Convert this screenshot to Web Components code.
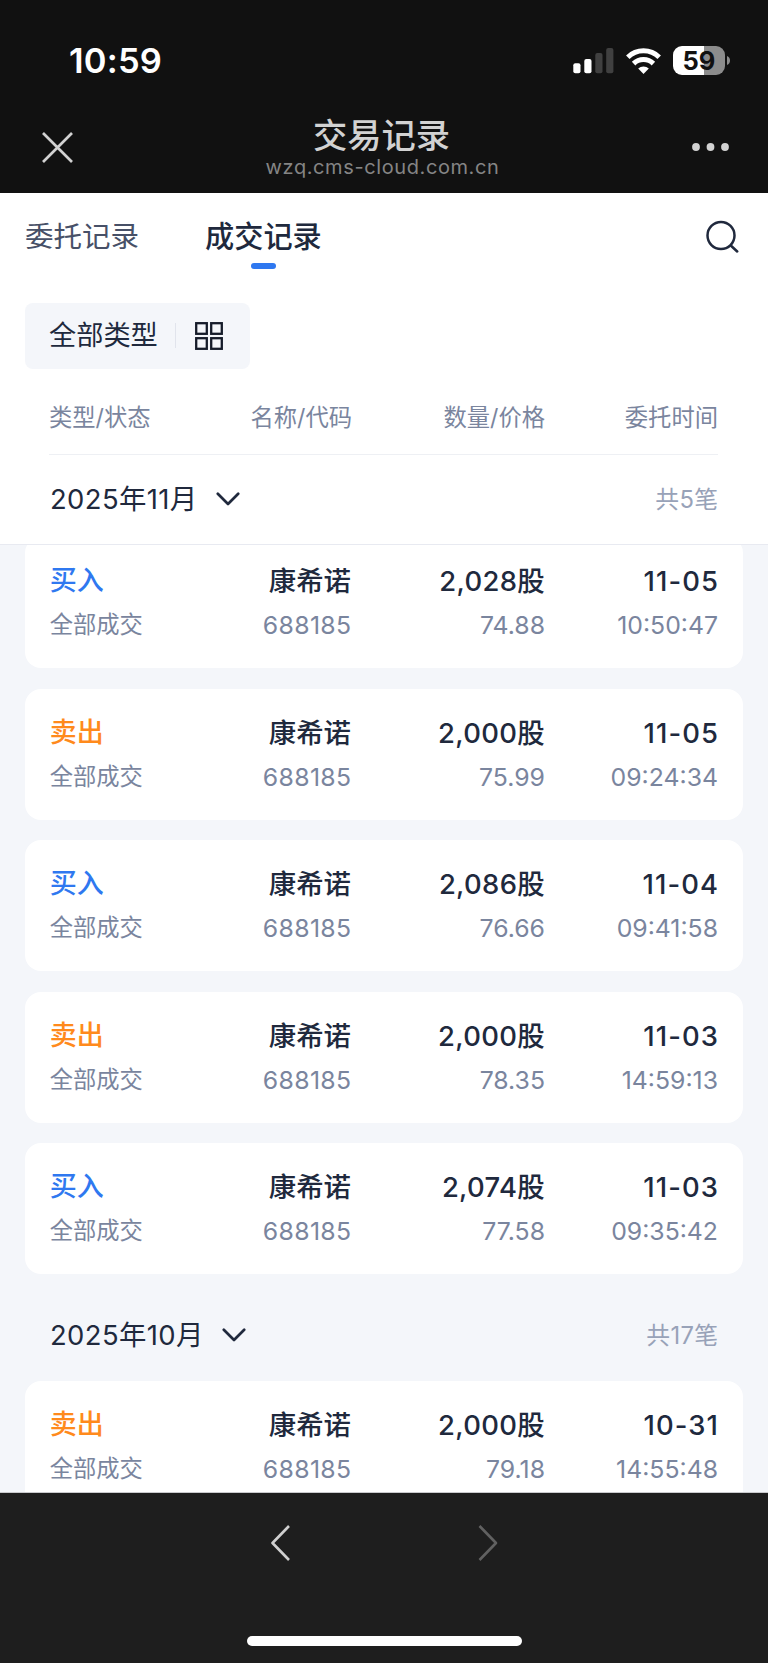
<!DOCTYPE html>
<html lang="zh-CN">
<head>
<meta charset="utf-8">
<title>交易记录</title>
<style>
  html, body {
    margin: 0;
    height: 100%;
  }
  body {
    font-family: Inter, "Noto Sans CJK SC", sans-serif;
    color: #20293d;
    overflow: hidden;
  }
</style>
</head>
<body>
<trade-app></trade-app>

<template id="status-bar">
  <style>
    :host {
      display: flex;
      justify-content: space-between;
      align-items: center;
      box-sizing: border-box;
      height: 103px;
      padding: 19px 38px 0 69px;
      color: #fff;
    }
    .time { font-size: 34.5px; font-weight: 600; line-height: 40px; letter-spacing: 0.2px; font-kerning: none; }
    .icons { display: flex; align-items: center; gap: 12px; }
    svg { display: block; }
    .signal { margin-bottom: 2px; }
    .battery { display: flex; align-items: center; gap: 2px; margin-bottom: 1px; }
    .level {
      width: 52px;
      height: 29px;
      border-radius: 9px;
      background: linear-gradient(90deg, #fff 31px, #8c8c8c 31px);
      color: #111;
      font-size: 25.5px;
      font-weight: 700;
      line-height: 29px;
      text-align: center;
    }
  </style>
  <span class="time"><slot></slot></span>
  <div class="icons">
    <svg class="signal" width="41" height="27" viewBox="0 0 41 27">
      <rect x="0.3" y="16.2" width="7.2" height="10" rx="2" fill="#fff"/>
      <rect x="11.3" y="12" width="7.2" height="14.2" rx="2" fill="#fff"/>
      <rect x="22.3" y="6" width="7.2" height="20.2" rx="2" fill="#404040"/>
      <rect x="33.2" y="1" width="7.2" height="25.2" rx="2" fill="#404040"/>
    </svg>
    <svg width="35" height="26" viewBox="0 0 35 26">
      <g fill="none" stroke="#fff" stroke-width="5">
        <path d="M1.8 9.2a22.6 22.6 0 0 1 31.4 0"/>
        <path d="M7.6 15.6a14.2 14.2 0 0 1 19.8 0"/>
      </g>
      <path d="M17.5 26l-5.3-5.4a7.6 7.6 0 0 1 10.6 0z" fill="#fff"/>
    </svg>
    <div class="battery">
      <div class="level"><slot name="battery"></slot></div>
      <svg width="3" height="9" viewBox="0 0 3 9"><path d="M0 0q3 1.2 3 4.5t-3 4.5z" fill="#8c8c8c"/></svg>
    </div>
  </div>
</template>

<template id="nav-bar">
  <style>
    :host {
      display: flex;
      justify-content: space-between;
      align-items: center;
      box-sizing: border-box;
      height: 90px;
      padding: 0 38px 2px 42px;
      color: #d2d2d2;
    }
    .titles { text-align: center; }
    .title { height: 42px; line-height: 40px; margin-right: 2px; font-size: 34.3px; font-weight: 500; }
    .host { height: 21px; line-height: 19px; font-size: 20px; letter-spacing: 0.6px; color: #858585; }
    svg { display: block; }
  </style>
  <svg width="31" height="31" viewBox="0 0 31 31" fill="none" stroke="#d2d2d2" stroke-width="2.7">
    <path d="M1 1l29 29M30 1L1 30"/>
  </svg>
  <div class="titles">
    <div class="title"><slot></slot></div>
    <div class="host"><slot name="host"></slot></div>
  </div>
  <svg width="38" height="8" viewBox="0 0 38 8" fill="#d2d2d2">
    <circle cx="4" cy="4" r="3.9"/><circle cx="18.5" cy="4" r="3.9"/><circle cx="33" cy="4" r="3.9"/>
  </svg>
</template>

<template id="record-tab">
  <style>
    :host {
      display: flex;
      flex-direction: column;
      align-items: center;
      gap: 4px;
      color: #475067;
      font-size: 28.5px;
    }
    .label { height: 44px; line-height: 44px; white-space: nowrap; }
    .mark { width: 25px; height: 6px; border-radius: 3px; }
    :host([active]) { color: #20293d; font-weight: 500; font-size: 29.2px; }
    :host([active]) .mark { background: #2f78f0; }
  </style>
  <span class="label"><slot></slot></span>
  <span class="mark"></span>
</template>

<template id="type-filter">
  <style>
    :host {
      display: flex;
      align-items: center;
      box-sizing: border-box;
      width: 225px;
      height: 66px;
      padding: 0 0 1px 24px;
      border-radius: 8px;
      background: #f4f6fa;
      font-size: 27.2px;
    }
    .label { height: 40px; line-height: 40px; white-space: nowrap; }
    .rule { width: 1px; height: 25px; margin: 0 19px 0 17px; background: #e1e4ec; }
  </style>
  <span class="label"><slot></slot></span>
  <span class="rule"></span>
  <svg width="28" height="28" viewBox="0 0 28 28" fill="none" stroke="#161c2a" stroke-width="2.3">
    <rect x="1.2" y="1.2" width="10.6" height="10.6"/>
    <rect x="16.2" y="1.2" width="10.6" height="10.6"/>
    <rect x="1.2" y="16.2" width="10.6" height="10.6"/>
    <rect x="16.2" y="16.2" width="10.6" height="10.6"/>
  </svg>
</template>

<template id="column-head">
  <style>
    :host {
      display: grid;
      grid-template-columns: var(--columns);
      align-items: center;
      box-sizing: border-box;
      height: 73px;
      margin: 13px 50px 0 49px;
      border-bottom: 1px solid #eef0f4;
      color: #7a859e;
      font-size: 23.3px;
      line-height: 34px;
      text-align: right;
      white-space: nowrap;
    }
    ::slotted(:first-child) { text-align: left; }
  </style>
  <slot></slot>
</template>

<template id="month-row">
  <style>
    :host {
      display: flex;
      align-items: center;
      box-sizing: border-box;
      height: 89px;
      padding: 0 50px 1px;
    }
    .month { height: 40px; line-height: 40px; font-size: 27.4px; letter-spacing: 0.4px; }
    svg { margin-left: 18px; }
    .total { margin-left: auto; height: 34px; line-height: 36px; font-size: 23.8px; letter-spacing: 0.3px; margin-right: -0.3px; color: #98a2b8; }
  </style>
  <span class="month"></span>
  <svg width="24" height="14" viewBox="0 0 24 14" fill="none" stroke="#20293d" stroke-width="2.7" stroke-linecap="round" stroke-linejoin="round">
    <path d="M1.8 1.8L12 12 22.2 1.8"/>
  </svg>
  <span class="total"></span>
</template>

<template id="trade-card">
  <style>
    :host {
      display: grid;
      grid-template-columns: var(--columns);
      grid-template-rows: 44px 44px;
      align-items: center;
      box-sizing: border-box;
      height: 131px;
      margin: 0 25px;
      padding: 22px 25px 0 24px;
      border-radius: 16px;
      background: #fff;
      text-align: right;
      white-space: nowrap;
    }
    span { height: 44px; line-height: 44px; }
    .main { font-size: 27.4px; font-weight: 500; }
    .sub { font-size: 24.8px; color: #7a859e; }
    .side, .status { text-align: left; padding-left: 0.7px; }
    .side { color: #2f78f0; font-size: 27px; }
    .status { font-size: 23.3px; }
    .name { padding-right: 1px; }
    .qty { letter-spacing: 0.35px; }
    .date { letter-spacing: 1.1px; margin-right: -1.1px; }
    .code { letter-spacing: 0.35px; padding-right: 0.5px; }
    :host([side="卖出"]) .side { color: #ff8a1c; }
  </style>
  <span class="main side"></span>
  <span class="main name"></span>
  <span class="main qty"></span>
  <span class="main date"></span>
  <span class="sub status"></span>
  <span class="sub code"></span>
  <span class="sub price"></span>
  <span class="sub time"></span>
</template>

<template id="browser-bar">
  <style>
    :host {
      display: flex;
      flex-direction: column;
      align-items: center;
      justify-content: space-between;
      box-sizing: border-box;
      height: 171px;
      padding: 32px 0 17px;
      border-top: 1px solid #c9cacd;
      background: #1e1e1e;
    }
    .arrows { display: flex; gap: 187px; }
    .home { width: 275px; height: 10px; border-radius: 5px; background: #fff; }
  </style>
  <div class="arrows">
    <svg width="20" height="36" viewBox="0 0 20 36" fill="none" stroke="#d0d0d0" stroke-width="2.6" stroke-linejoin="round">
      <path d="M18 1L1.500 18 18 35"/>
    </svg>
    <svg width="20" height="36" viewBox="0 0 20 36" fill="none" stroke="#616161" stroke-width="2.6" stroke-linejoin="round">
      <path d="M1.500 1L18 18 1.500 35"/>
    </svg>
  </div>
  <div class="home"></div>
</template>

<template id="trade-app">
  <style>
    :host {
      --columns: 126px 177px 193px 173px;
      display: flex;
      flex-direction: column;
      height: 100vh;
      background: #f4f6fa;
    }
    .top { background: #111; }
    .panel { flex: none; background: #fff; border-bottom: 1px solid #e8eaf1; }
    .tabs { display: flex; align-items: flex-start; box-sizing: border-box; height: 88px; padding: 22px 28px 0 25px; }
    .tabs record-tab + record-tab { margin-left: 66px; }
    .search { margin: 4px 0 0 auto; }
    type-filter { margin: 22px 0 0 25px; }
    .list { flex: 1; min-height: 0; overflow: hidden; }
    .cards { display: flex; flex-direction: column; gap: 20.5px; }
    .cards:first-child { margin-top: -7.6px; }
    .list month-row { height: 107px; padding-top: 15px; }
  </style>
  <div class="top">
    <status-bar>10:59<span slot="battery">59</span></status-bar>
    <nav-bar>交易记录<span slot="host">wzq.cms-cloud.com.cn</span></nav-bar>
  </div>
  <div class="panel">
    <div class="tabs">
      <record-tab>委托记录</record-tab>
      <record-tab active>成交记录</record-tab>
      <svg class="search" width="34" height="34" viewBox="0 0 34 34" fill="none" stroke="#20293d" stroke-width="2.5" stroke-linecap="round">
        <circle cx="15" cy="16.500" r="13.500"/><path d="M25.300 27l5.900 5.500"/>
      </svg>
    </div>
    <type-filter>全部类型</type-filter>
    <column-head>
      <span>类型/状态</span><span>名称/代码</span><span>数量/价格</span><span>委托时间</span>
    </column-head>
    <month-row month="2025年11月" total="共5笔"></month-row>
  </div>
  <div class="list">
    <div class="cards">
      <trade-card side="买入" qty="2,028股" date="11-05" price="74.88" time="10:50:47"></trade-card>
      <trade-card side="卖出" qty="2,000股" date="11-05" price="75.99" time="09:24:34"></trade-card>
      <trade-card side="买入" qty="2,086股" date="11-04" price="76.66" time="09:41:58"></trade-card>
      <trade-card side="卖出" qty="2,000股" date="11-03" price="78.35" time="14:59:13"></trade-card>
      <trade-card side="买入" qty="2,074股" date="11-03" price="77.58" time="09:35:42"></trade-card>
    </div>
    <month-row month="2025年10月" total="共17笔"></month-row>
    <div class="cards">
      <trade-card side="卖出" qty="2,000股" date="10-31" price="79.18" time="14:55:48"></trade-card>
    </div>
  </div>
  <browser-bar></browser-bar>
</template>

<script>
class TemplateElement extends HTMLElement {
  connectedCallback() {
    if (this.shadowRoot) return;
    const root = this.attachShadow({ mode: "open" });
    root.append(document.getElementById(this.localName).content.cloneNode(true));
    this.fill(root);
  }

  fill() {}
}

class MonthRow extends TemplateElement {
  fill(root) {
    root.querySelector(".month").textContent = this.getAttribute("month");
    root.querySelector(".total").textContent = this.getAttribute("total");
  }
}

class TradeCard extends TemplateElement {
  fill(root) {
    const defaults = { name: "康希诺", code: "688185", status: "全部成交" };
    for (const key of ["side", "name", "qty", "date", "status", "code", "price", "time"]) {
      root.querySelector(`.${key}`).textContent = this.getAttribute(key) || defaults[key];
    }
  }
}

customElements.define("month-row", MonthRow);
customElements.define("trade-card", TradeCard);
for (const tag of ["status-bar", "nav-bar", "record-tab", "type-filter", "column-head", "browser-bar", "trade-app"]) {
  customElements.define(tag, class extends TemplateElement {});
}
</script>
</body>
</html>
